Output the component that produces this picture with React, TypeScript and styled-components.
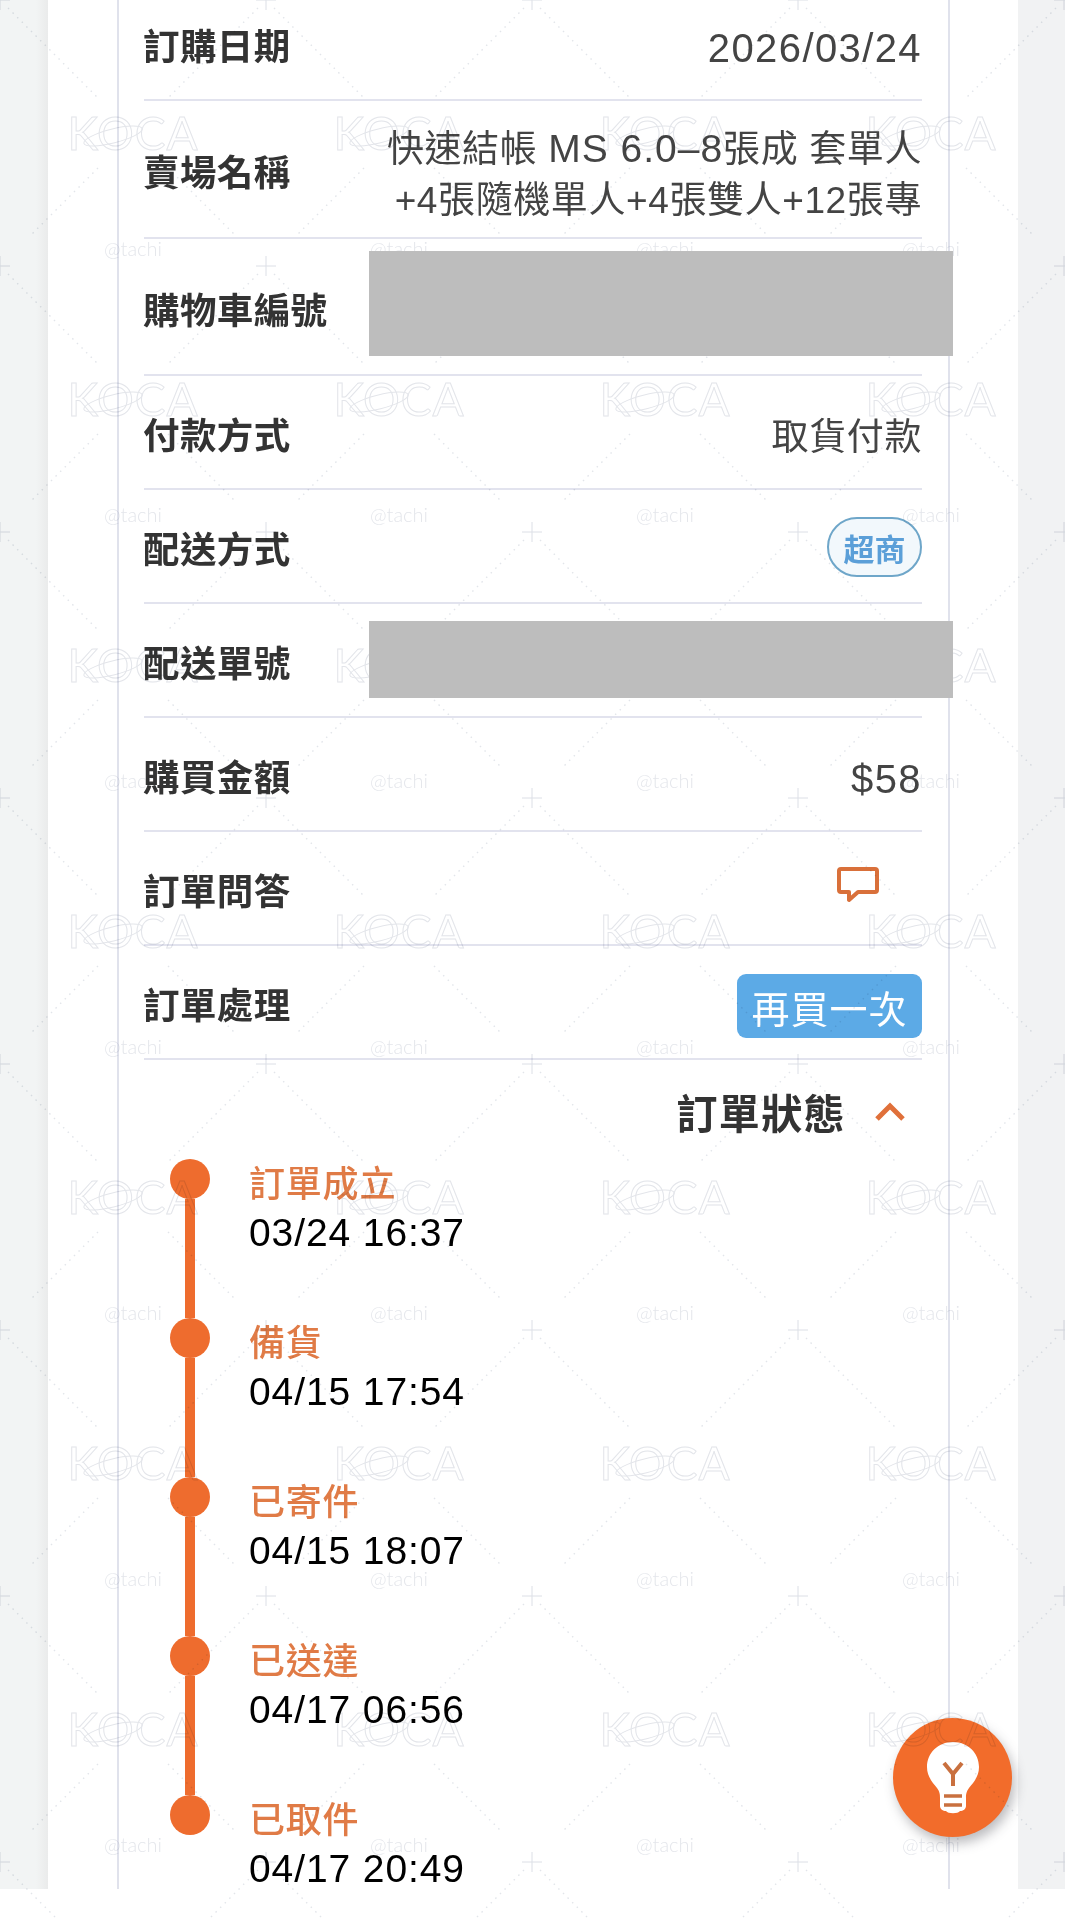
import React from "react";
import styled, { createGlobalStyle } from "styled-components";

const SANS = `"Liberation Sans", "Noto Sans CJK TC", sans-serif`;
const CJK = `"Noto Sans CJK TC", "Liberation Sans", sans-serif`;

const GlobalStyle = createGlobalStyle`
  html, body {
    margin: 0;
    padding: 0;
    background: #fff;
  }
  * {
    box-sizing: border-box;
  }
`;

const steps = [
  { name: "訂單成立", time: "03/24 16:37" },
  { name: "備貨", time: "04/15 17:54" },
  { name: "已寄件", time: "04/15 18:07" },
  { name: "已送達", time: "04/17 06:56" },
  { name: "已取件", time: "04/17 20:49" },
];

function Watermark() {
  const diagonals = [
    "M8 8 L98 98",
    "M258 8 L168 98",
    "M98 168 L30 236",
    "M168 168 L236 236",
  ];
  const corners = [
    [0, 0],
    [266, 0],
    [0, 266],
    [266, 266],
  ];
  return (
    <WatermarkLayer width="1065" height="1920" aria-hidden="true">
      <defs>
        <pattern id="koca" width="266" height="266" patternUnits="userSpaceOnUse">
          {diagonals.map((d) => (
            <path key={d} d={d} stroke="#e2e5ea" strokeWidth="1.4" strokeDasharray="1.5 5" fill="none" />
          ))}
          {corners.map(([x, y]) => (
            <path
              key={`${x}-${y}`}
              d={`M${x - 10} ${y} H${x + 10} M${x} ${y - 10} V${y + 10}`}
              stroke="#dcdfe6"
              strokeWidth="1"
              fill="none"
            />
          ))}
          <text
            x="133"
            y="150"
            textAnchor="middle"
            fontFamily="Lato, sans-serif"
            fontSize="46"
            fontWeight="400"
            letterSpacing="1"
            fill="none"
            stroke="#e3e5ea"
            strokeWidth="1"
          >
            KOCA
          </text>
          <ellipse cx="113" cy="136" rx="30" ry="7" transform="rotate(-14 113 136)" fill="none" stroke="#e3e5ea" />
          <text x="133" y="256" textAnchor="middle" fontFamily="Lato, sans-serif" fontSize="20" fontWeight="300" fill="#e4e6eb">
            @tachi
          </text>
        </pattern>
      </defs>
      <rect width="1065" height="1920" fill="url(#koca)" />
    </WatermarkLayer>
  );
}

export default function App() {
  return (
    <Page>
      <GlobalStyle />
      <Shell>
        <Sheet>
          <Card>
            <Row $height={101} $first>
              <Label>訂購日期</Label>
              <Value $latin>2026/03/24</Value>
            </Row>
            <Row $height={138}>
              <Label>賣場名稱</Label>
              <Value>
                快速結帳 <Latin>MS 6.0–8</Latin>張成 套單人
                <br />
                +4張隨機單人+4張雙人+12張專
              </Value>
            </Row>
            <Row $height={137}>
              <Label>購物車編號</Label>
              <Mask $top={12} $height={105} />
            </Row>
            <Row>
              <Label>付款方式</Label>
              <Value>取貨付款</Value>
            </Row>
            <Row>
              <Label>配送方式</Label>
              <Badge>超商</Badge>
            </Row>
            <Row>
              <Label>配送單號</Label>
              <Mask $top={17} $height={77} />
            </Row>
            <Row>
              <Label>購買金額</Label>
              <Value $latin>$58</Value>
            </Row>
            <Row>
              <Label>訂單問答</Label>
              <ChatButton>
                <svg width="44" height="40" viewBox="0 0 44 40" fill="none">
                  <path
                    d="M5 3 H39 Q41 3 41 5 V24 Q41 26 39 26 H22 L13 34 V26 H5 Q3 26 3 24 V5 Q3 3 5 3 Z"
                    stroke="#d9703a"
                    strokeWidth="4"
                    strokeLinejoin="round"
                  />
                </svg>
              </ChatButton>
            </Row>
            <Row>
              <Label>訂單處理</Label>
              <BuyAgain>再買一次</BuyAgain>
            </Row>
            <StatusHeader>
              <StatusTitle>訂單狀態</StatusTitle>
              <svg width="32" height="22" viewBox="0 0 32 22" fill="none">
                <polyline points="3,19 16,6 29,19" stroke="#e0703a" strokeWidth="5" />
              </svg>
            </StatusHeader>
            <Timeline>
              {steps.map((step, i) => (
                <Step key={step.time}>
                  <Marker>
                    <Dot />
                    {i < steps.length - 1 && <Connector />}
                  </Marker>
                  <StepText>
                    <StepName>{step.name}</StepName>
                    <StepTime>{step.time}</StepTime>
                  </StepText>
                </Step>
              ))}
            </Timeline>
          </Card>
        </Sheet>
      </Shell>
      <Fab>
        <svg width="56" height="76" viewBox="0 0 56 76">
          <path
            d="M28 2 C13 2 2 13 2 27 C2 36 7 42 12 48 C15 52 15 55 15 58 V66 C15 69 18 71 21 71 C23 74 33 74 35 71 C38 71 41 69 41 66 V58 C41 55 41 52 44 48 C49 42 54 36 54 27 C54 13 43 2 28 2 Z"
            fill="#fff"
          />
          <path d="M19 23 L28 34 L37 23 M28 34 V46" stroke="#c9703f" strokeWidth="4" fill="none" />
          <path d="M19 56 H37 M19 65 H37" stroke="#c9703f" strokeWidth="3.6" fill="none" />
        </svg>
      </Fab>
      <Watermark />
    </Page>
  );
}

const Page = styled.div`
  position: relative;
  width: 1065px;
  height: 1920px;
  overflow: hidden;
  background: #fff;
`;

const Shell = styled.div`
  height: 1889px;
  padding: 0 47px 0 48px;
  background: linear-gradient(90deg, #f2f4f4 0, #f2f4f4 36px, #eaebeb 48px, #f1f2f3 48px);
`;

const Sheet = styled.div`
  height: 100%;
  padding: 0 68px 0 69px;
  background: #fff;
`;

const Card = styled.div`
  height: 100%;
  padding: 0 26px 0 25px;
  border-left: 2px solid #e0e2ec;
  border-right: 2px solid #e0e2ec;
`;

const Row = styled.div<{ $height?: number; $first?: boolean }>`
  position: relative;
  display: flex;
  justify-content: space-between;
  align-items: center;
  height: ${(props) => props.$height ?? 114}px;
  padding: ${(props) => (props.$first ? "0 0 8px" : "6px 0 0")};
  border-bottom: 2px solid #e2e3ee;
`;

const Label = styled.div`
  margin: -3px 0 0 -1px;
  font-family: ${CJK};
  font-size: 36.5px;
  font-weight: 700;
  letter-spacing: 0.4px;
  color: #333;
  white-space: nowrap;
`;

const Value = styled.div<{ $latin?: boolean }>`
  margin-top: 5px;
  font-family: ${SANS};
  font-size: ${(props) => (props.$latin ? 40 : 37)}px;
  line-height: 51px;
  letter-spacing: ${(props) => (props.$latin ? "1.4px" : "0.6px")};
  color: #444;
  text-align: right;
  white-space: nowrap;
`;

const Latin = styled.span`
  font-size: 39px;
  letter-spacing: 1px;
`;

const Mask = styled.div<{ $top: number; $height: number }>`
  position: absolute;
  z-index: 2;
  top: ${(props) => props.$top}px;
  left: 225px;
  right: -31px;
  height: ${(props) => props.$height}px;
  background: #bdbdbd;
`;

const Badge = styled.div`
  display: flex;
  align-items: center;
  justify-content: center;
  width: 95px;
  height: 60px;
  margin-top: -4px;
  border: 2px solid #6ea6c9;
  border-radius: 30px;
  background: #f2f8fc;
  font-family: ${CJK};
  font-size: 31px;
  font-weight: 700;
  color: #5b9fd8;
`;

const ChatButton = styled.div`
  display: flex;
  width: 44px;
  height: 40px;
  margin: -10px 42px 0 0;
`;

const BuyAgain = styled.div`
  display: flex;
  align-items: center;
  justify-content: center;
  width: 185px;
  height: 64px;
  margin-top: 2px;
  border-radius: 9px;
  background: #5caae6;
  font-family: ${CJK};
  font-size: 38px;
  font-weight: 400;
  letter-spacing: 1px;
  color: #fff;
  white-space: nowrap;
`;

const StatusHeader = styled.div`
  display: flex;
  justify-content: flex-end;
  align-items: center;
  gap: 28px;
  height: 99px;
  padding: 3px 16px 0 0;
`;

const StatusTitle = styled.div`
  font-family: ${CJK};
  font-size: 41px;
  font-weight: 700;
  letter-spacing: 1.4px;
  color: #333;
`;

const Timeline = styled.div`
  display: flex;
  flex-direction: column;
  padding: 0 0 0 26px;
`;

const Step = styled.div`
  display: flex;
  gap: 39px;
  height: 159px;
`;

const Marker = styled.div`
  display: flex;
  flex-direction: column;
  align-items: center;
  width: 40px;
`;

const Dot = styled.div`
  flex: none;
  width: 40px;
  height: 40px;
  border-radius: 50%;
  background: #ee6c2e;
`;

const Connector = styled.div`
  flex: 1;
  width: 10px;
  background: #ee6c2e;
`;

const StepText = styled.div`
  display: flex;
  flex-direction: column;
  gap: 6px;
`;

const StepName = styled.div`
  font-family: ${CJK};
  font-size: 36px;
  font-weight: 500;
  line-height: 44px;
  letter-spacing: 0.8px;
  color: #e07b46;
`;

const StepTime = styled.div`
  font-family: ${SANS};
  font-size: 39px;
  line-height: 48px;
  letter-spacing: 0.9px;
  color: #000;
  white-space: nowrap;
`;

const Fab = styled.div`
  position: absolute;
  left: 893px;
  top: 1718px;
  display: flex;
  align-items: center;
  justify-content: center;
  width: 119px;
  height: 119px;
  border-radius: 50%;
  background: #f26c2b;
  box-shadow: 3px 6px 12px rgba(60, 60, 70, 0.35);
`;

const WatermarkLayer = styled.svg`
  position: absolute;
  top: 0;
  left: 0;
  pointer-events: none;
  mix-blend-mode: multiply;
`;
